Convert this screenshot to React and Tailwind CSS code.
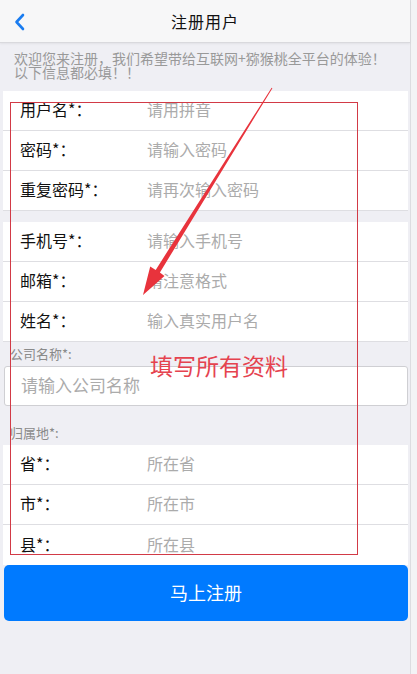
import React from 'react';

const groupA = [
  { label: '用户名*：', hint: '请用拼音' },
  { label: '密码*：', hint: '请输入密码' },
  { label: '重复密码*：', hint: '请再次输入密码' },
];

const groupB = [
  { label: '手机号*：', hint: '请输入手机号' },
  { label: '邮箱*：', hint: '请注意格式' },
  { label: '姓名*：', hint: '输入真实用户名' },
];

const groupC = [
  { label: '省*：', hint: '所在省' },
  { label: '市*：', hint: '所在市' },
  { label: '县*：', hint: '所在县' },
];

function Row({ label, hint, last }) {
  return (
    <div className={`flex items-center h-[40px] pl-[17px] pb-[3px] ${last ? '' : 'border-b border-[#dedee2]'}`}>
      <span className="w-[127px] text-[16px] text-[#111]">{label}</span>
      <span className="text-[16px] text-[#ababab]">{hint}</span>
    </div>
  );
}

function Group({ rows, open }) {
  return (
    <div className="bg-white ml-[3px] mr-[2px] flex-shrink-0">
      {rows.map((r, i) => (
        <Row key={r.label} {...r} last={open && i === rows.length - 1} />
      ))}
    </div>
  );
}

export default function App() {
  return (
    <div className="relative flex h-[674px] w-[417px] overflow-hidden bg-[#efeff4] [font-family:'Noto_Sans_CJK_SC',sans-serif]">
      <div className="w-[410px] flex flex-col">
        <header className="h-[43px] flex-shrink-0 relative flex items-center justify-center bg-[#f7f7f8] border-b border-[#d9d9dd] shadow-[0_1px_2px_rgba(0,0,0,0.06)]">
          <svg className="absolute left-[13px] top-[13px]" width="14" height="18" viewBox="0 0 14 18">
            <path d="M10 2 L3.5 9 L10 16" fill="none" stroke="#1a7cf0" strokeWidth="2.6" strokeLinecap="round" strokeLinejoin="round" />
          </svg>
          <h1 className="text-[16px] text-[#111] tracking-[1px]">注册用户</h1>
        </header>

        <p className="h-[48px] flex-shrink-0 pl-[14px] pt-[8px] text-[14px] leading-[14px] text-[#999]">
          欢迎您来注册，我们希望带给互联网+猕猴桃全平台的体验！
          <br />
          以下信息都必填！！
        </p>

        <Group rows={groupA} />
        <div className="h-[11px] flex-shrink-0" />
        <Group rows={groupB} />

        <div className="h-[24px] flex-shrink-0 pl-[10px] pt-[4px] text-[13px] leading-[15px] text-[#8a8a8a]">公司名称*:</div>
        <div className="ml-[4px] mr-[2px] h-[40px] flex-shrink-0 flex items-center bg-white border border-[#cfcfd3] rounded-[3px] pl-[16px] pb-[2px]">
          <span className="text-[17px] text-[#ababab]">请输入公司名称</span>
        </div>

        <div className="h-[39px] flex-shrink-0 pl-[10px] pt-[19px] text-[13px] leading-[15px] text-[#8a8a8a]">归属地*:</div>
        <Group rows={groupC} open />

        <button className="ml-[4px] mr-[2px] h-[56px] flex-shrink-0 rounded-[5px] bg-[#007aff] text-white text-[18px] pb-[2px]">
          马上注册
        </button>
      </div>

      <div className="flex-1 bg-[#f3f3f5] border-l border-[#dcdce0]" />

      {/* annotation overlay */}
      <div className="absolute left-[10px] top-[102px] w-[348px] h-[453px] border border-[#d23a46] pointer-events-none" />
      <div className="absolute left-[150px] top-[352px] text-[23px] leading-[26px] text-[#e5434f] pointer-events-none">
        填写所有资料
      </div>
      <svg className="absolute left-0 top-0 pointer-events-none" width="417" height="674" viewBox="0 0 417 674">
        <polygon
          points="272.4,88.2 271.6,87.8 155.7,269.9 150.2,266.4 143,295 164.5,276.0 159.9,272.5"
          fill="#e8333c"
        />
      </svg>
    </div>
  );
}
